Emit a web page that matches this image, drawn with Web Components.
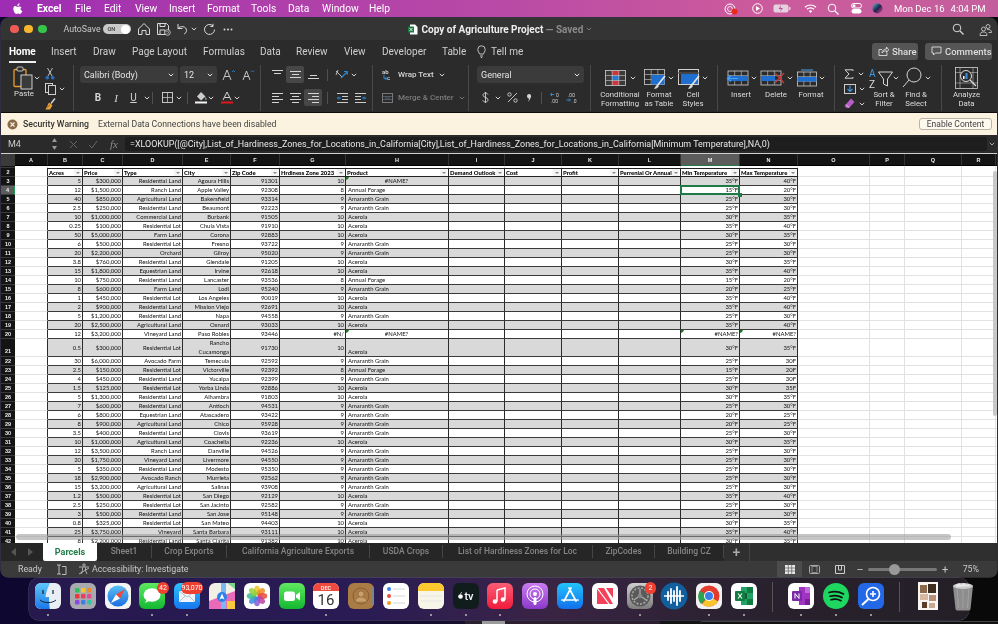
<!DOCTYPE html>
<html lang="en"><head><meta charset="utf-8"><title>Excel</title>
<style>
html,body{margin:0;height:624px;width:998px;overflow:hidden;background:#0a0a14;font-family:Roboto,"Noto Sans",sans-serif}
body{background:linear-gradient(90deg,#0e0830 0,#120a38 30%,#1a1228 55%,#0b0b0b 80%,#090909 100%);display:flex;flex-direction:column;filter:blur(.3px)}
</style></head><body>
<mac-menubar></mac-menubar>
<xl-window>
  <xl-titlebar></xl-titlebar>
  <xl-tabs></xl-tabs>
  <xl-ribbon></xl-ribbon>
  <xl-security></xl-security>
  <xl-formula></xl-formula>
  <xl-sheet></xl-sheet>
  <xl-sheettabs></xl-sheettabs>
  <xl-status></xl-status>
</xl-window>
<mac-dock></mac-dock>
<mac-desk></mac-desk>
<script>
const S='fill="none" stroke="currentColor"';
const grid=(x,y,w,h,c='#cfcfcf')=>`<rect x="${x}" y="${y}" width="${w}" height="${h}" fill="none" stroke="${c}" stroke-width=".8"/><path d="M${x} ${y+h/3}h${w}M${x} ${y+2*h/3}h${w}M${x+w/3} ${y}v${h}M${x+2*w/3} ${y}v${h}" stroke="${c}" stroke-width=".6"/>`;
const brush=`<path d="M21 7L13 17" stroke="#e8e8e8" stroke-width="1.6"/><path d="M13 16c-2 1-2 3-3 4 2 0 4-1 5-3z" fill="#d8d8d8"/>`;
const lines=(d)=>`<path d="${d}" stroke="currentColor" stroke-width="1" fill="none"/>`;
const ICONS={
 apple:[10,12,`<path fill="#fff" d="M7.4 6.4c0-1.3 1-1.9 1.1-2-.6-.9-1.5-1-1.8-1-.8-.1-1.5.4-1.9.4s-1-.4-1.7-.4C2.2 2.4 1.3 3 .8 3.8c-1 1.7-.3 4.3.7 5.7.5.7 1 1.5 1.8 1.5.7 0 1-.5 1.8-.5s1.1.5 1.8.5 1.3-.7 1.700-1.400c.5-.8.8-1.600.8-1.600s-1.900-.7-2-2.600zM6 2.200c.4-.5.7-1.200.6-1.900-.6 0-1.300.4-1.700.9-.4.4-.7 1.100-.6 1.800.6 0 1.300-.3 1.700-.8z"/>`],
 home:[14,14,`<path ${S} stroke-width="1" d="M1.5 7L7 1.500 12.500 7v5.500H9V8.500H5v4H1.500z"/>`],
 save:[15,14,`<path ${S} stroke-width="1" d="M1.500 1.500h9l2 2v9h-11z M4 1.500v3h5v-3M4 12V8h5v4"/><circle cx="11.500" cy="10.500" r="2.800" fill="#2f2f2f" stroke="currentColor" stroke-width=".8"/><path d="M10.300 10.500a1.200 1.200 0 1 1 .5 1" ${S} stroke-width=".6"/>`],
 undo:[13,12,`<path ${S} stroke-width="1" d="M3 1v4.500h4.500M3 5.500C5 2.500 11.500 3 11.500 7.500c0 2-1.300 3-2.500 3.500"/>`],
 redo:[13,13,`<path ${S} stroke-width="1" d="M11.500 6.500a5 5 0 1 1-1.500-3.600M10 .8v2.700H7.300"/>`],
 caret:[6,4,`<path ${S} stroke-width="1" d="M.8.8L3 3l2.200-2.200"/>`],
 dots:[10,3,`<g fill="currentColor"><circle cx="1.500" cy="1.500" r="1"/><circle cx="5" cy="1.500" r="1"/><circle cx="8.500" cy="1.500" r="1"/></g>`],
 search:[12,12,`<circle cx="5" cy="5" r="3.800" ${S} stroke-width="1"/><path ${S} stroke-width="1.200" d="M8 8l3.500 3.500"/>`],
 people:[13,13,`<circle cx="9" cy="3.500" r="2" ${S} stroke-width=".8"/><circle cx="4.500" cy="6" r="2" ${S} stroke-width=".8"/><path ${S} stroke-width=".8" d="M1 12.500c0-3 1.500-3.500 3.500-3.500S8 9.500 8 12.500zM8 6.500c3 0 4.500.5 4.500 3h-3"/>`],
 xlfile:[10,11,`<path d="M2 .5h5l2.500 2.500v7.500H2z" fill="#fff"/><rect y="2.500" width="6" height="6" rx=".6" fill="#1d7a45"/><path d="M1.500 4l3 3M4.500 4l-3 3" stroke="#fff" stroke-width=".8"/>`],
 bulb:[9,13,`<path ${S} stroke-width=".9" d="M2.500 9C2.300 7.500.8 6.800.8 4.500a3.700 3.700 0 0 1 7.400 0C8.200 6.800 6.700 7.500 6.500 9zM3 11h3M3.800 12.500h1.400"/>`],
 share:[11,10,`<path ${S} stroke-width=".9" d="M4 3.500H1v6h8V7M4 7c0-2.500 2-4 4.500-4V1l2.200 2.800L8.500 6.500V4.800C6.500 4.800 5 5.500 4 7z"/>`],
 comment:[11,10,`<path ${S} stroke-width=".9" d="M1 1h9v6H4.500L2.500 9V7H1z"/>`],
 paste:[20,24,`<rect x="1" y="3.500" width="12" height="17" rx="1" fill="none" stroke="#e89a2c" stroke-width="1.300"/><rect x="4" y="1" width="6" height="4" rx="1" fill="#2b2b2b" stroke="#cfcfcf" stroke-width=".9"/><rect x="8" y="9" width="11" height="14" fill="#3a3a3a" stroke="#e0e0e0" stroke-width=".9"/>`],
 cut:[10,12,`<path stroke="#cfcfcf" stroke-width=".9" d="M2.500 0L7 8M7.500 0L3 8"/><circle cx="2.300" cy="9.800" r="1.800" fill="#2a73c4"/><circle cx="7.700" cy="9.800" r="1.800" fill="#2a73c4"/>`],
 copy:[11,12,`<rect x=".5" y=".5" width="7" height="9" fill="none" stroke="#cfcfcf"/><rect x="3.500" y="2.500" width="7" height="9" fill="#2b2b2b" stroke="#cfcfcf"/>`],
 fmtbrush:[11,12,`<path d="M10 .5L6 5.500" stroke="#ddd" stroke-width="1.300"/><path d="M4 4.500l3.500 2.800-2.500 4.200H.5z" fill="#e6a437"/><path d="M2 9.500l3-2.500" stroke="#5a3d10" stroke-width=".6"/>`],
 grow:[14,12,`<path ${S} stroke-width=".9" d="M1 11L5 1l4 10M2.500 7.500h5"/><path stroke="#2a8ad8" fill="none" stroke-width=".9" d="M10 3l1.500-1.500L13 3"/>`],
 shrink:[14,12,`<path ${S} stroke-width=".9" d="M2 11L5.500 2 9 11M3.300 7.500h4.400"/><path stroke="#2a8ad8" fill="none" stroke-width=".9" d="M10 1.500L11.500 3 13 1.500"/>`],
 borders:[12,12,`<rect x=".5" y=".5" width="10" height="10" ${S} stroke-width=".9"/><path ${S} stroke-width=".7" d="M5.500 .5v10M.5 5.500h10"/>`],
 fill:[13,13,`<path d="M6 1l4.500 4.500L6 9.500 2 5.500z" fill="#ccc"/><path d="M10.500 6c1 1.500 1.500 2 .9 2.800-.8.5-1.500-.2-.9-2.800z" fill="#8cc"/><rect y="10.500" width="12" height="2" fill="#f4f4f4"/>`],
 fontA:[12,13,`<path ${S} stroke-width="1" d="M2 9L6 1l4 8M3.500 6.500h5"/><rect y="10.500" width="12" height="2" fill="#e0161c"/>`],
 al1:[11,9,lines('M0 .5h11M2 3.500h7')],
 al2:[11,11,lines('M0 2.500h11M2 5.500h7M0 8.500h11')],
 al3:[11,11,lines('M2 6.500h7M0 9.500h11')],
 alL:[11,11,lines('M0 1.500h11M0 4.500h7M0 7.500h11M0 10.500h7')],
 alC:[11,11,lines('M0 1.500h11M2 4.500h7M0 7.500h11M2 10.500h7')],
 alR:[11,11,lines('M0 1.500h11M4 4.500h7M0 7.500h11M4 10.500h7')],
 orient:[13,12,`<path stroke="#ccc" fill="none" stroke-width=".9" d="M1 2l6 6M3 1l-2 5"/><path stroke="#2a8ad8" fill="none" stroke-width="1.100" d="M6 9l6-6M9 2.500h3.300v3.300"/>`],
 ind1:[11,10,`<path stroke="#ccc" d="M0 .5h11M5 3.500h6M5 6.500h6M0 9.500h11"/><path stroke="#2a8ad8" fill="none" d="M4 5H.5M2 3.500L.5 5 2 6.500"/>`],
 ind2:[11,10,`<path stroke="#ccc" d="M0 .5h11M0 3.500h6M0 6.500h6M0 9.500h11"/><path stroke="#2a8ad8" fill="none" d="M7 5h3.500M9 3.500L10.500 5 9 6.500"/>`],
 wrap:[11,12,`<text x="0" y="5" font-size="6" font-family="Roboto" fill="#ddd">ab</text><text x="5" y="11" font-size="6" font-family="Roboto" fill="#ddd">c</text><path stroke="#2a8ad8" fill="none" d="M2 6v3.500h2.500M3.500 8L4.800 9.500 3.500 11"/>`],
 merge:[11,10,`<rect x=".5" y=".5" width="10" height="9" fill="none" stroke="#777"/><path d="M.5 3.500h10M.5 6.500h10" stroke="#777" stroke-width=".6"/><path d="M3 5h5" stroke="#2a6aa8"/>`],
 dollar:[7,11,`<path ${S} stroke-width=".9" d="M6 2.500C5.500 1.500 4.500 1 3.500 1 2 1 1 2 1 3.200 1 6 6 4.800 6 7.800 6 9 5 10 3.500 10 2 10 1.200 9.300 .8 8.300M3.500 0v11"/>`],
 pct:[11,11,`<path ${S} stroke-width=".9" d="M1 10L10 1"/><circle cx="2.500" cy="2.500" r="1.700" ${S} stroke-width=".9"/><circle cx="8.500" cy="8.500" r="1.700" ${S} stroke-width=".9"/>`],
 comma:[5,8,`<path fill="currentColor" d="M2 0a2.200 2.200 0 0 1 1.500 3.800C3.200 5.500 2.200 7 1 8c.6-1.200 1-2.400 1-3.500C.8 4.500 0 3.300 0 2.200 0 1 .8 0 2 0z"/>`],
 incd:[12,11,`<path stroke="#2a8ad8" fill="none" d="M4 2.500H.8M2 1L.5 2.500 2 4"/><text x="6" y="4.500" font-size="5" fill="#ccc" font-family="Roboto">0</text><text x="1" y="10.500" font-size="5" fill="#ccc" font-family="Roboto">.00</text>`],
 decd:[12,11,`<text x="2" y="4.500" font-size="5" fill="#ccc" font-family="Roboto">.00</text><path stroke="#2a8ad8" fill="none" d="M.5 8h3.500M3 6.500L4.500 8 3 9.500"/><text x="6.500" y="10.500" font-size="5" fill="#ccc" font-family="Roboto">.0</text>`],
 cond:[21,16,`<rect x=".5" y=".5" width="20" height="15" fill="#3a3a3a"/><rect x="7" y="1" width="7" height="4.500" fill="#c9383d"/><rect x="7" y="10.500" width="7" height="4.500" fill="#c9383d"/><rect x="7" y="5.500" width="7" height="5" fill="#2a78cc"/>`+grid(.5,.5,20,15)],
 ftable:[22,18,grid(.5,.5,20,15)+`<rect x="7.500" y="6" width="13" height="9.500" fill="#1e6fd0"/>`+brush],
 cstyle:[22,18,`<rect x=".5" y=".5" width="20" height="15" fill="none" stroke="#cfcfcf"/><rect x=".5" y="3" width="20" height="2" fill="#444"/><rect x="3" y="5" width="17" height="10" fill="#1e6fd0"/>`+brush],
 insert:[23,16,grid(2,1,20,14)+`<rect x="2" y="6" width="20" height="5" fill="#1e6fd0"/><path d="M12 8.500H1.500M5 5.500l-3.500 3 3.500 3" stroke="#4aa3ef" fill="none" stroke-width="1.200"/>`],
 del:[25,16,grid(1,1,20,14)+`<rect x="1" y="6" width="14" height="5" fill="#1e6fd0"/><path d="M15 3l9 10M24 3l-9 10" stroke="#c43c3c" stroke-width="1.200"/>`],
 fmt:[20,18,`<path d="M4 1h12" stroke="#4aa3ef" stroke-width="1.200"/>`+grid(.5,3,19,14)+`<rect x=".5" y="8" width="19" height="4.500" fill="#1e6fd0"/>`],
 sigma:[10,10,`<path ${S} stroke-width="1" d="M9 2V.8H1l4 4.200-4 4.200h8V8"/>`],
 fdown:[12,10,`<rect x=".5" y=".5" width="11" height="9" fill="none" stroke="#ccc"/><path stroke="#3b9be6" fill="none" stroke-width="1.100" d="M6 1.500v6M3.500 5L6 7.500 8.500 5"/>`],
 erase:[11,11,`<path fill="#b75dc9" d="M7 .5L10.500 4 5 10H2.500L.5 8z"/><path d="M2 6.500l3 3" stroke="#eed" stroke-width=".8"/>`],
 sort:[24,20,`<text x="0" y="9" font-size="10" fill="#3b9be6" font-family="Roboto">A</text><text x="0" y="20" font-size="10" fill="#ddd" font-family="Roboto">Z</text><path ${S} stroke-width="1" d="M9.500 4h14l-5 7v7l-4-2v-5z"/>`],
 find:[20,23,`<circle cx="12" cy="8" r="7" ${S} stroke-width="1"/><path ${S} stroke-width="1" d="M7 13L1 20"/>`],
 analyze:[23,23,`<rect x=".5" y=".5" width="22" height="21" ${S} stroke-width=".8"/><path ${S} stroke-width=".5" d="M.5 5.500h22M.5 16h22M5 .5v21M18 .5v21"/><circle cx="11" cy="9" r="5.500" fill="#2b2b2b" stroke="#ddd"/><rect x="8" y="9" width="1.500" height="3" fill="#fff"/><rect x="10.500" y="6" width="2" height="6" fill="#3b8fe0"/><path d="M15 13l6 6" stroke="#ddd" stroke-width="1.200"/>`],
 spin:[7,14,`<path d="M3.500 1l2.500 4H1zM3.500 13L1 9h5z" fill="currentColor"/>`],
 xmark:[9,9,`<path ${S} stroke-width="1" d="M1 1l7 7M8 1L1 8"/>`],
 check:[10,9,`<path ${S} stroke-width="1" d="M1 5l3 3 5-7"/>`],
 secx:[11,11,`<circle cx="5.500" cy="5.500" r="5" fill="#8a6a4a"/><path stroke="#f6efe0" stroke-width="1.200" d="M3.500 3.500l4 4M7.500 3.500l-4 4"/>`],
 recmenu:[14,12,`<circle cx="6" cy="6" r="5" ${S}/><circle cx="6" cy="6" r="2.500" ${S} stroke-width=".8"/><circle cx="10.500" cy="8.500" r="3" fill="#e8291c"/>`],
 play:[11,11,`<circle cx="5.500" cy="5.500" r="4.800" ${S}/><path d="M4 3l4 2.500L4 8z" fill="currentColor"/>`],
 batt:[18,9,`<rect x=".5" y=".5" width="15" height="8" rx="2" fill="#e6d0df"/><rect x="16" y="3" width="1.500" height="3" rx=".5" fill="#e6d0df"/><path d="M8 1L5.500 5H8L7 8l3-4H7.500z" fill="#b5559d"/>`],
 wifi:[13,9,`<path ${S} stroke-width="1.200" d="M1 3.200a8 8 0 0 1 11 0M3 5.300a5 5 0 0 1 7 0"/><path d="M6.500 9L4.800 7a2.500 2.500 0 0 1 3.400 0z" fill="currentColor"/>`],
 ctrl:[11,11,`<rect x=".5" y=".5" width="10" height="4.500" rx="2.200" ${S}/><rect x=".5" y="6" width="10" height="4.500" rx="2.200" fill="currentColor"/><circle cx="3" cy="2.750" r="1.500" fill="currentColor"/>`],
 siri:[11,11,`<defs><linearGradient id="g1" x1="0" y1="0" x2="1" y2="1"><stop offset="0" stop-color="#3bc4d8"/><stop offset=".5" stop-color="#24224a"/><stop offset="1" stop-color="#d84aa0"/></linearGradient></defs><circle cx="5.500" cy="5.500" r="5" fill="url(#g1)"/>`],
 arrowL:[6,8,`<path d="M5 0v8L0 4z" fill="currentColor"/>`],
 arrowR:[6,8,`<path d="M1 0v8l5-4z" fill="currentColor"/>`],
 track:[11,11,`<path ${S} stroke-width=".9" d="M1 1h4M3 1v9M1 10h4M6 2.500h4v8H6"/>`],
 access:[12,12,`<circle cx="6" cy="2" r="1.200" ${S} stroke-width=".8"/><path ${S} stroke-width=".8" d="M1 4h10M4.500 4.500v3L3 11M7.500 4.500v3L9 11M1 11L11 5"/>`],
 vnormal:[10,9,`<rect width="10" height="9" fill="#e8e8e8"/><path stroke="#444" stroke-width=".6" d="M0 3h10M0 6h10M3.300 0v9M6.700 0v9"/>`],
 vlayout:[11,9,`<rect x=".5" y=".5" width="10" height="8" rx="1" fill="none" stroke="#aaa"/><rect x="3" y="1.500" width="5" height="6" fill="none" stroke="#aaa" stroke-width=".7"/>`],
 vbreak:[10,9,`<path fill="none" stroke="#ccc" d="M.5 .5h9v8h-9z M3.500 .5v4.500h3V.5"/>`]
};
class Base extends HTMLElement{
 constructor(){super();this.attachShadow({mode:'open'});}
 render(css,html){this.shadowRoot.innerHTML=`<style>${css}</style>${html}`;}
}
class XIco extends Base{
 connectedCallback(){const n=this.getAttribute('name');const[w,h,b]=ICONS[n];const col=this.getAttribute('color')||'inherit';
  this.render(`:host{display:inline-flex;align-items:center;justify-content:center;color:${col};flex:none;line-height:0}svg{display:block;overflow:visible}`,`<svg width="${w}" height="${h}" viewBox="0 0 ${w} ${h}" aria-hidden="true">${b}</svg>`);}
}
customElements.define('x-ico',XIco);
const I=(n,extra='')=>`<x-ico name="${n}" ${extra}></x-ico>`;

class MacMenubar extends Base{connectedCallback(){
 const items=[['File',29],['Edit',31],['View',34],['Insert',38],['Format',44],['Tools',37],['Data',34],['Window',47],['Help',30]];
 this.render(`:host{display:flex;align-items:center;height:17px;flex:none;background:linear-gradient(90deg,#9d2cb4 0,#ab3bab 20%,#b94aa6 50%,#cb5a9c 75%,#c45f9d 100%);color:#fff;font:10.300px/17px Roboto,sans-serif;padding-left:13px;box-sizing:border-box;white-space:nowrap}
 b{font-weight:700;margin-left:14px;width:38px;flex:none}span{flex:none}
 .r{margin-left:auto;margin-right:13px;width:261px;display:flex;align-items:center;font-size:9.500px}`,
 `${I('apple')}<b>Excel</b>${items.map(([t,w])=>`<span style="width:${w}px">${t}</span>`).join('')}
 <div class="r">${I('recmenu')}<x-ico name="play" style="margin-left:14px"></x-ico><x-ico name="batt" style="margin-left:10px"></x-ico><x-ico name="wifi" style="margin-left:12.500px"></x-ico><x-ico name="search" style="margin-left:10.500px"></x-ico><x-ico name="ctrl" style="margin-left:11.500px"></x-ico><x-ico name="siri" style="margin-left:10px"></x-ico><span style="margin-left:11.500px;margin-right:6px">Mon Dec 16</span><span>4:04 PM</span></div>`);
}}
class XlWindow extends Base{connectedCallback(){
 this.render(`:host{display:flex;flex-direction:column;flex:none;margin:1px 1px 0 1px;height:559px;border-radius:8px 8px 7px 7px;overflow:hidden;box-shadow:0 0 0 .5px #555;background:#2b2b2b}`,`<slot></slot>`);
}}
class XlTitlebar extends Base{connectedCallback(){
 this.render(`:host{display:flex;align-items:center;height:22px;flex:none;background:#343434;color:#d8d8d8;font:8.800px Roboto,sans-serif;white-space:nowrap}
 i{width:8.500px;height:8.500px;border-radius:50%;display:block;margin-right:5.500px;flex:none}
 .t{font-size:10px;font-weight:700;color:#eee}.s{color:#8a8a8a;font-size:10px;font-weight:700}
 .as{width:39px;flex:none;color:#c8c8c8}
 .tg{width:28px;flex:none;height:10px;border-radius:5px;background:#c9c9c9;position:relative;font-size:5.500px;color:#444;line-height:10px;padding-left:5px;box-sizing:border-box;font-weight:600}
 .tg::after{content:"";position:absolute;right:.5px;top:.5px;width:9px;height:9px;border-radius:50%;background:#fff}`,
 `<i style="background:#ee5b55;margin-left:9px"></i><i style="background:#f6b62d"></i><i style="background:#35c649;margin-right:17px"></i>
 <span class="as">AutoSave</span><span class="tg">ON</span>
 <x-ico name="home" style="margin-left:6px"></x-ico><x-ico name="save" style="margin-left:5px"></x-ico><x-ico name="undo" style="margin-left:4px"></x-ico><x-ico name="caret" style="margin-left:3px"></x-ico><x-ico name="redo" style="margin-left:6px"></x-ico><x-ico name="dots" style="margin-left:7px"></x-ico>
 <x-ico name="xlfile" style="margin-left:175px;margin-right:4px"></x-ico><span class="t">Copy of Agriculture Project</span><span class="s">&nbsp;— Saved</span><x-ico name="caret" color="#777" style="margin-left:3px"></x-ico>
 <x-ico name="search" style="margin-left:auto;margin-right:15px"></x-ico><x-ico name="people" style="margin-right:5px"></x-ico>`);
}}
class XlTabs extends Base{connectedCallback(){
 const tabs=[['Insert',42],['Draw',39],['Page Layout',71],['Formulas',57],['Data',36],['Review',48],['View',38],['Developer',60],['Table',34]];
 this.render(`:host{display:flex;align-items:center;height:22px;flex:none;background:#2b2b2b;color:#cfcfcf;font:10px Roboto,sans-serif;padding-left:8px;white-space:nowrap;position:relative}
 span{flex:none}
 .hm{width:42px}.on{color:#fff;font-weight:700;position:relative;display:inline-block}.on::after{content:"";position:absolute;left:0;right:0;top:15.500px;height:2px;background:#eee}
 .btn{display:inline-flex;align-items:center;gap:3px;height:17px;border-radius:3px;background:#555;font-weight:500;color:#ddd;padding:0 5px 0 6px;box-sizing:border-box;font-size:9.500px}
 .sp{margin-left:auto;display:flex;gap:7px;margin-right:5px}`,
 `<span class="hm"><span class="on">Home</span></span>${tabs.map(([t,w])=>`<span style="width:${w}px">${t}</span>`).join('')}
 <span style="display:flex;align-items:center;gap:5px;margin-left:1px">${I('bulb')}<span>Tell me</span></span>
 <div class="sp"><span class="btn" style="width:46px">${I('share')}Share</span><span class="btn" style="width:67px">${I('comment')}Comments</span></div>`);
}}
const cell=(w,h='',cl='')=>`<span class="c ${cl}" style="width:${w}px">${h}</span>`;
const dd=(w,txt)=>`<span class="dd" style="width:${w}px"><span>${txt}</span>${I('caret')}</span>`;
const big=(w,ico,l,car=true,g=2)=>`<div class="big" style="width:${w}px"><div class="bi">${I(ico)}${car?I('caret','style="margin-left:'+g+'px"'):''}</div><div class="bl">${l}</div></div>`;
const hsep='<span class="hs"></span>';
class XlRibbon extends Base{connectedCallback(){
 this.render(`:host{display:flex;height:51px;flex:none;background:#2b2b2b;color:#d4d4d4;font:8px Roboto,sans-serif;border-bottom:1px solid #0b0b0b;box-sizing:border-box;white-space:nowrap}
 .g{box-sizing:border-box;border-right:1px solid #484848;display:flex;flex-direction:column;gap:6px;flex:none;height:46px;margin-top:3px;padding-top:1px}
 .g.h{flex-direction:row;gap:0}
 .r{display:flex;align-items:center;height:17px}
 .c{display:inline-flex;align-items:center;justify-content:center;height:17px;flex:none}
 .on{background:#474747;border-radius:2px}
 .hs{width:1px;height:12px;background:#505050;flex:none}
 .dd{display:inline-flex;align-items:center;justify-content:space-between;height:17px;background:#3b3b3b;border-radius:3px;box-sizing:border-box;padding:0 4px;color:#e4e4e4;font-size:9px;flex:none}
 .big{display:flex;flex-direction:column;align-items:center;flex:none}
 .bi{height:24px;display:flex;align-items:center;justify-content:center}
 .bl{font-size:7.800px;line-height:9px;text-align:center;height:18px;white-space:pre-line;margin-top:-.5px;color:#ddd}
 .b{font-weight:700;font-size:10px}.it{font-style:italic;font-family:"Liberation Serif",serif;font-size:11px}.u{text-decoration:underline;font-size:10px}
 .col{display:flex;flex-direction:column;gap:0}
 .s{height:15px;display:flex;align-items:center}`,
 `<div class="g h" style="width:73px;padding-left:10px">
    <div class="big" style="width:30px"><div class="bi" style="height:23px">${I('paste')}${I('caret','style="margin-left:1px"')}</div><div class="bl" style="margin-top:0;margin-left:-4px">Paste</div></div>
    <div class="col" style="margin-left:4px;padding-top:0"><div class="s">${I('cut')}</div><div class="s">${I('copy')}${I('caret','style="margin-left:3px"')}</div><div class="s">${I('fmtbrush')}</div></div>
  </div>
  <div class="g" style="width:187px;padding-left:6px">
    <div class="r">${dd(98,'Calibri (Body)')}${cell(2)}${dd(37,'12')}${cell(2)}${cell(19,I('grow'))}${cell(19,I('shrink'))}</div>
    <div class="r">${cell(9)}${cell(18,'<span class="b">B</span>')}${cell(18,'<span class="it">I</span>')}${cell(17,'<span class="u">U</span>')}${cell(10,I('caret'))}${hsep}${cell(9)}${cell(12,I('borders'))}${cell(9,I('caret'))}${cell(4)}${hsep}${cell(7)}${cell(13,I('fill'))}${cell(6,I('caret'),'')}${cell(6)}${cell(13,I('fontA'))}${cell(7,I('caret'))}</div>
  </div>
  <div class="g" style="width:112px;padding-left:7px">
    <div class="r">${cell(18,I('al1'))}${cell(18,I('al2'),'on')}${cell(18,I('al3'))}${cell(5)}${hsep}${cell(6)}${cell(15,I('orient'))}${cell(10,I('caret'))}</div>
    <div class="r">${cell(18,I('alL'))}${cell(18,I('alC'))}${cell(18,I('alR'),'on')}${cell(5)}${hsep}${cell(6)}${cell(16,I('ind1'))}${cell(20,I('ind2'))}</div>
  </div>
  <div class="g" style="width:96px;padding-left:9px">
    <div class="r"><span style="display:flex;align-items:center;gap:5px;font-weight:500">${I('wrap')}<span>Wrap Text</span>${I('caret')}</span></div>
    <div class="r"><span style="display:flex;align-items:center;gap:5px;color:#7b7b7b;font-weight:500">${I('merge','color="#777"')}<span>Merge &amp; Center</span>${I('caret','color="#777"')}</span></div>
  </div>
  <div class="g" style="width:122px;padding-left:8px">
    <div class="r">${dd(107,'General')}</div>
    <div class="r">${cell(16,I('dollar'))}${cell(10,I('caret'))}${cell(18,I('pct'))}${cell(16,I('comma'))}${cell(4)}${hsep}${cell(6)}${cell(15,I('incd'))}${cell(18,I('decd'))}</div>
  </div>
  <div class="g h" style="width:127px;padding-left:8px">${big(42,'cond','Conditional\nFormatting',true,4)}${big(36,'ftable','Format\nas Table')}${big(32,'cstyle','Cell\nStyles')}</div>
  <div class="g h" style="width:117px;padding-left:5px">${big(36,'insert','Insert')}${big(34,'del','Delete')}${big(36,'fmt','Format')}</div>
  <div class="g h" style="width:107px;padding-left:9px">
    <div class="col" style="width:25px;padding-top:1px"><div class="s">${I('sigma')}${I('caret','style="margin-left:4px"')}</div><div class="s">${I('fdown')}${I('caret','style="margin-left:3px"')}</div><div class="s">${I('erase')}${I('caret','style="margin-left:4px"')}</div></div>
    ${big(30,'sort','Sort &amp;\nFilter',true,0)}${big(34,'find','Find &amp;\nSelect',true,3)}
  </div>
  <div class="g h" style="width:49px;border:0;padding-left:2px">${big(45,'analyze','Analyze\nData',false)}</div>`);
}}
class XlSecurity extends Base{connectedCallback(){
 this.render(`:host{display:flex;align-items:center;height:22px;flex:none;background:#fbf3df;color:#444;font:8.700px Roboto,sans-serif;padding-left:6px;white-space:nowrap;box-sizing:border-box}
 b{font-weight:500;color:#333;margin-left:5px;width:75px;flex:none}.bt{margin-left:auto;margin-right:5px;border:1px solid #b9b4a6;border-radius:3px;background:#fdf9ee;font-size:8.500px;height:12px;width:73px;box-sizing:border-box;display:flex;align-items:center;justify-content:center}`,
 `${I('secx')}<b>Security Warning</b><span>External Data Connections have been disabled</span><span class="bt">Enable Content</span>`);
}}
class XlFormula extends Base{connectedCallback(){
 this.render(`:host{display:flex;align-items:center;height:18px;flex:none;background:#2a2a2a;color:#ccc;font:9px Roboto,sans-serif;white-space:nowrap;border-bottom:1px solid #cfcfcf;box-sizing:content-box;position:relative}
 .n{margin-left:7px;width:43px}.f{margin-left:7px;flex:none;width:862px;height:14px;background:#1e1e1e;border-radius:2px;padding-left:5px;box-sizing:border-box;color:#e8e8e8;line-height:14px;overflow:hidden;font-size:8.930px}
 .fx{font:italic 11px "Liberation Serif",serif;color:#8a8a8a;margin-left:12px;width:8px;flex:none}`,
 `<span class="n">M4</span>${I('spin','color="#999"')}<x-ico name="xmark" color="#666" style="margin-left:11px"></x-ico><x-ico name="check" color="#666" style="margin-left:10px"></x-ico><span class="fx">fx</span>
 <span class="f">=XLOOKUP([@City],List_of_Hardiness_Zones_for_Locations_in_California[City],List_of_Hardiness_Zones_for_Locations_in_California[Minimum Temperature],NA,0)</span>
 <x-ico name="caret" color="#aaa" style="margin-left:2px"></x-ico>`);
}}
const AM='Amaranth Grain',AC='Acerola',AF='Annual Forage',RL='Residential Land',RT='Residential Lot',AG='Agricultural Land';
const DATA=[
[5,'$300,000',RL,'Agoura Hills',91301,10,'#NAME?',35,40],[12,'$1,500,000','Ranch Land','Apple Valley',92308,8,AF,15,20],[40,'$850,000',AG,'Bakersfield',93314,9,AM,25,30],[2.5,'$250,000',RL,'Beaumont',92223,9,AM,25,30],[10,'$1,000,000','Commercial Land','Burbank',91505,10,AC,30,35],[0.25,'$100,000',RT,'Chula Vista',91910,10,AC,35,40],[50,'$5,000,000','Farm Land','Corona',92883,10,AC,30,35],[6,'$500,000',RT,'Fresno',93722,9,AM,25,30],[20,'$2,200,000','Orchard','Gilroy',95020,9,AM,25,30],[3.8,'$760,000',RL,'Glendale',91205,10,AC,30,35],[15,'$1,800,000','Equestrian Land','Irvine',92618,10,AC,35,40],[10,'$750,000',RL,'Lancaster',93536,8,AF,15,20],[8,'$600,000','Farm Land','Lodi',95240,9,AM,20,25],[1,'$450,000',RT,'Los Angeles',90019,10,AC,35,40],[2,'$900,000',RL,'Mission Viejo',92691,10,AC,35,40],[5,'$1,200,000',RL,'Napa',94558,9,AM,25,30],[20,'$2,500,000',AG,'Oxnard',93033,10,AC,35,40],[12,'$3,200,000','Vineyard Land','Paso Robles',93446,'#N/','#NAME?','#NAME?','#NAME?'],[0.5,'$300,000',RT,'Rancho Cucamonga',91730,10,AC,30,35],[30,'$6,000,000','Avocado Farm','Temecula',92592,9,AM,25,'30F'],[2.5,'$150,000',RT,'Victorville',92392,8,AF,15,'20F'],[4,'$450,000',RL,'Yucaipa',92399,9,AM,25,'30F'],[1.5,'$125,000',RT,'Yorba Linda',92886,10,AC,30,'35F'],[5,'$1,300,000',RL,'Alhambra',91803,10,AC,30,35],[7,'$600,000',RL,'Antioch',94531,9,AM,25,30],[6,'$800,000','Equestrian Land','Atascadero',93422,9,AM,20,25],[8,'$900,000',AG,'Chico',95928,9,AM,20,25],[3.5,'$400,000',RL,'Clovis',93619,9,AM,25,30],[10,'$1,000,000',AG,'Coachella',92236,10,AC,30,35],[12,'$3,500,000','Ranch Land','Danville',94526,9,AM,25,30],[20,'$1,750,000','Vineyard Land','Livermore',94550,9,AM,25,30],[5,'$350,000',RL,'Modesto',95350,9,AM,25,30],[18,'$2,900,000','Avocado Ranch','Murrieta',92562,9,AM,25,30],[15,'$3,200,000',AG,'Salinas',93908,9,AM,25,30],[1.2,'$500,000',RT,'San Diego',92129,10,AC,35,40],[2.5,'$250,000',RT,'San Jacinto',92582,9,AM,25,30],[3,'$500,000',RL,'San Jose',95148,9,AM,25,30],[0.8,'$325,000',RT,'San Mateo',94403,10,AC,30,35],[25,'$3,750,000','Vineyard','Santa Barbara',93111,10,AC,35,40],[8,'$2,200,000',RL,'Santa Clarita',91382,10,AC,30,35]];
class XlSheet extends Base{connectedCallback(){
 const W=[14,33,35,40,60,48,49,66,103,56,57,57,62,59,58,72,35,57,34,3];
 const L=['A','B','C','D','E','F','G','H','I','J','K','L','M','N','O','P','Q','R',''];
 const HD=['Acres','Price','Type','City','Zip Code','Hrdiness Zone 2023','Product','Demand Outlook','Cost','Profit','Perrenial Or Annual','Min Temperature','Max Temperature'];
 const hr=[12,2,9];DATA.forEach((_,i)=>hr.push(i==18?18:9));
 let h=`<span class="corner"></span>`;
 L.forEach((l,i)=>{h+=`<span class="ch${l=='M'?' cs':''}">${l}</span>`;});
 h+=`<span class="rh"></span>`;L.forEach(()=>h+=`<span class="e t0"></span>`);
 h+=`<span class="rh">2</span><span class="e l"></span>`;
 HD.forEach((t,i)=>{h+=`<span class="hd"><span class="ht">${t}</span><span class="fb"></span></span>`;});
 for(let i=14;i<L.length;i++)h+=`<span class="e"></span>`;
 DATA.forEach((d,i)=>{const r=i+3,odd=r%2==1,cl=odd?'g':'w';
  const tall=r==21;
  h+=`<span class="rh${r==4?' rs':''}${tall?' rb':''}">${r}</span><span class="e l"></span>`;
  const fm=v=>typeof v=='number'?v+'°F':v;
  const vals=[d[0],d[1],d[2],d[3],d[4],d[5],d[6],'','','','',fm(d[7]),fm(d[8])];
  vals.forEach((v,j)=>{let k='d '+cl;
   if(j==6){k+=(v=='#NAME?')?' ctr':' lft';}
   if(tall)k+=j==6?' bot':' mid';
   let inner=`<span class="tx">${v}</span>`;
   if(tall&&j==3)inner='<span class="tx wrap">Rancho<br>Cucamonga</span>';
   let tri='';
   if((r==3&&j==6)||(r==20&&(j==6||j==11||j==12)))tri='<i class="tri"></i>';
   let sel='';if(r==4&&j==11){sel='<i class="sel"></i><i class="hd2"></i>';k+=' vis';}
   h+=`<span class="${k}">${tri}${inner}${sel}</span>`;});
  for(let j=14;j<L.length;j++)h+=`<span class="e"></span>`;
 });
 this.render(`:host{display:block;height:389px;flex:none;overflow:hidden;background:#fff;position:relative;font:5.900px/9px Lato,sans-serif;color:#111}
 .grid{display:grid;grid-template-columns:${W.join('px ')}px;grid-template-rows:${hr.join('px ')}px}
 .grid>span{box-sizing:border-box;min-width:0;overflow:hidden;white-space:nowrap}
 .corner{background:#3a3a3a}
 .ch{background:#141414;color:#eee;font:700 5.500px/12px "Liberation Sans",sans-serif;text-align:center;border-right:1px solid #333;border-bottom:1px solid #000}
 .ch.cs{background:#5c5c5c;border-bottom:1px solid #1f7a45}
 .rh{background:#141414;color:#eee;font:700 5.500px/9px "Liberation Sans",sans-serif;border-bottom:1px solid #3a3a3a;display:flex;align-items:center;justify-content:center}
 .rh.rb{align-items:flex-end}
 .rh.rs{background:#5c5c5c;border-right:1px solid #1f9a55}
 .e{border-right:1px solid #e2e2e2;border-bottom:1px solid #e2e2e2;background:#fff}
 .e.l{border-right:1px solid #2b2b2b}
 .t0{border-bottom:0}
 .hd{position:relative;background:#fff;border:1px solid #222;border-width:1px 1px 1px 0;display:flex;align-items:center;font-weight:900;color:#000;padding-left:1px;line-height:7px}
 .ht{overflow:hidden;flex:1;min-width:0}
 .fb{width:7px;height:7px;flex:none;margin-right:1px;background:#f4f4f4;position:relative}
 .fb::after{content:"";position:absolute;left:1.500px;top:2.500px;border:2px solid transparent;border-top:2.500px solid #888;border-bottom:0}
 .d{border-right:1px solid #2b2b2b;border-bottom:1px solid #3a3a3a;text-align:right;padding-right:1px;position:relative;line-height:8px}
 .d.g{background:#d9d9d9}.d.w{background:#fff}
 .lft{text-align:left;padding-left:2px}.ctr{text-align:center}
 .mid{display:flex;align-items:center;justify-content:flex-end}
 .bot{display:flex;align-items:flex-end;justify-content:flex-start}
 .tx.wrap{display:block;line-height:8.500px;text-align:right}
 .grid>.vis{overflow:visible;z-index:2}
 .tri{position:absolute;left:0;top:0;border:1.500px solid transparent;border-left:2.500px solid #1e7a1e;border-top:2.500px solid #1e7a1e;width:0;height:0;box-sizing:border-box}
 .sel{position:absolute;inset:-1px -1px -1px -1px;border:2px solid #1f7a45;display:block}
 .hd2{position:absolute;right:-3px;bottom:-3px;width:4px;height:4px;background:#1f7a45;display:block}
 .vs{position:absolute;left:992px;top:17px;width:4px;height:245px;border-radius:2px;background:#c8c8c8}
 .hs{position:absolute;left:15px;top:380px;width:935px;height:6px;border-radius:3px;background:rgba(150,150,150,.55)}`,
 `<div class="grid">${h}</div><div class="vs"></div><div class="hs"></div>`);
}}
class XlSheettabs extends Base{connectedCallback(){
 const T=[['Sheet1',55],['Crop Exports',75],['California Agriculture Exports',143],['USDA Crops',73],['List of Hardiness Zones for Loc',150],['ZipCodes',62],['Building CZ',69]];
 this.render(`:host{display:flex;align-items:stretch;height:18px;flex:none;background:#262626;color:#858585;font:500 8.500px/18px Roboto,sans-serif;white-space:nowrap}
 .n{width:42px;display:flex;align-items:center;gap:10px;padding-left:10px;box-sizing:border-box;color:#555;flex:none}
 .a{width:54px;background:#fff;color:#1d7d47;font-weight:700;font-size:9px;text-align:center;border-radius:0 0 2px 2px;flex:none}
 .t{border-right:1px solid #454545;margin:2px 0 3px;line-height:13px;box-sizing:border-box;text-align:center;flex:none}
 .p{width:26px;text-align:center;background:#2f2f2f;border-right:1px solid #454545;font-size:14px;color:#aaa;box-sizing:border-box;flex:none}.f{flex:1;background:#2f2f2f}`,
 `<div class="n">${I('arrowL')}${I('arrowR')}</div><span class="a">Parcels</span>${T.map(([t,w])=>`<span class="t" style="width:${w}px">${t}</span>`).join('')}<span class="p">+</span><span class="f"></span>`);
}}
class XlStatus extends Base{connectedCallback(){
 this.render(`:host{display:flex;align-items:center;height:16px;flex:none;background:#3a3a3a;color:#c9c9c9;font:8.800px Roboto,sans-serif;white-space:nowrap;padding-left:17px;box-sizing:border-box;position:relative}
 .rd{width:38px;flex:none}
 .v{height:16px;width:25px;display:flex;align-items:center;justify-content:center;flex:none}
 .on{background:#4c4c4c}
 .z{margin-left:auto;display:flex;align-items:center;padding-right:18px}
 .sl{width:69px;height:3px;background:#777;position:relative;border-radius:1.500px;flex:none}
 .sl::after{content:"";position:absolute;left:20.500px;top:-4px;width:11px;height:11px;border-radius:50%;background:#999}
 .pm{width:16px;text-align:center;font-size:11px;flex:none}.pc{width:26px;text-align:right;flex:none}`,
 `<span class="rd">Ready</span><x-ico name="track"></x-ico><x-ico name="access" style="margin-left:11px;margin-right:2px"></x-ico><span>Accessibility: Investigate</span>
 <div class="z"><span class="v on">${I('vnormal')}</span><span class="v">${I('vlayout')}</span><span class="v">${I('vbreak')}</span><span class="pm">–</span><span class="sl"></span><span class="pm">+</span><span class="pc">75%</span></div>`);
}}
const tile=(bg,inner,extra='')=>`<svg width="26" height="26" viewBox="0 0 26 26" aria-hidden="true"><defs>${extra}</defs><rect width="26" height="26" rx="6" fill="${bg}"/>${inner}</svg>`;
const lg=(id,a,b)=>`<linearGradient id="${id}" x1="0" y1="0" x2="0" y2="1"><stop offset="0" stop-color="${a}"/><stop offset="1" stop-color="${b}"/></linearGradient>`;
const DOCK=[
 [tile('#e9eef4',`<path d="M0 6a6 6 0 0 1 6-6h9c-3 6-4 10-4.500 14H14c0 4 .2 8 .8 12H6a6 6 0 0 1-6-6z" fill="url(#fa)"/><path d="M8 7v4M18 7v4" stroke="#123" stroke-width="1.200"/><path d="M5 17c4 3.500 12 3.500 16 0" stroke="#123" fill="none" stroke-width="1"/>`,lg('fa','#5fc8f8','#1a78e8')),1],
 [tile('#a9a9b0',[['#2fbf5a',5,5],['#f6c52c',11,5],['#f08a24',17,5],['#e83a38',5,11],['#e8405a',11,11],['#e84a90',17,11],['#8a4ae0',5,17],['#3a80e8',11,17],['#2fc8a0',17,17]].map(([c,x,y])=>`<rect x="${x}" y="${y}" width="4.500" height="4.500" rx="1" fill="${c}"/>`).join('')),0],
 [tile('#f3f3f3',`<circle cx="13" cy="13" r="10.500" fill="url(#sf)"/><path d="M20 6l-9 5.500 4 4z" fill="#f04a3a"/><path d="M6 20l5-8.500 4 4z" fill="#fff"/>`,lg('sf','#5ac0f5','#1a6ee0')),0],
 [tile('url(#ms)',`<ellipse cx="13" cy="12" rx="8.500" ry="6.800" fill="#fff"/><path d="M8 16l-2 4 5-2.500z" fill="#fff"/>`,lg('ms','#5ee860','#13b832')),1],
 [tile('url(#ml)',`<rect x="5" y="8" width="16" height="11" fill="#eef3fa"/><path d="M5 8l8 6 8-6M5 19l6-6M21 19l-6-6" stroke="#9ab" stroke-width=".7" fill="none"/>`,lg('ml','#2dc2fb','#1676ef')),1],
 [tile('#f2efe4',`<path d="M0 18L26 8v18H0z" fill="#e86ab8"/><path d="M12 0h5v26h-5z" fill="#7ab8f0"/><path d="M18 18h8v8h-8z" fill="#f6c93a"/><path d="M18 0h8v6z" fill="#7ad88a"/><circle cx="13" cy="14" r="5" fill="#2c82e8"/><path d="M13 10.500l2.500 6-2.500-1.300-2.500 1.300z" fill="#fff"/>`),0],
 [tile('#fff',[['#f0c21f',0],['#f08a24',45],['#e84a3a',90],['#c03ea0',135],['#8a5ad8',180],['#3a8ae0',225],['#3ab890',270],['#8fd03a',315]].map(([c,a])=>`<ellipse cx="13" cy="7.500" rx="3" ry="4.800" fill="${c}" opacity=".85" transform="rotate(${a} 13 13)"/>`).join('')),0],
 [tile('url(#ft)',`<rect x="5" y="8.500" width="11" height="9.500" rx="2.500" fill="#fff"/><path d="M17 12l4-3v8.500l-4-3z" fill="#fff"/>`,lg('ft','#60e860','#13b830')),0],
 [`<svg width="26" height="26" viewBox="0 0 26 26" aria-label="Calendar"><rect width="26" height="26" rx="6" fill="#fff"/><path d="M0 8V6a6 6 0 0 1 6-6h14a6 6 0 0 1 6 6v2z" fill="#f04a40"/><text x="13" y="6.500" text-anchor="middle" font-size="5.500" font-family="Roboto" fill="#fff" font-weight="500">DEC</text><text x="13" y="22" text-anchor="middle" font-size="15" font-family="Roboto" fill="#333">16</text></svg>`,1],
 [tile('#a97b45',`<circle cx="13" cy="13" r="8" fill="none" stroke="#8a5f30" stroke-width="1"/><circle cx="13" cy="11" r="3" fill="#c9a070" stroke="#8a5f30" stroke-width=".6"/><path d="M7.500 18.500c1-3 3-4 5.500-4s4.500 1 5.500 4" fill="#c9a070"/><rect x="24.500" y="4" width="1.500" height="18" fill="#4a90d8"/>`),0],
 [tile('#fff',[[6,'#3a80ea'],[13,'#f04a3a'],[20,'#f59a1e']].map(([y,c])=>`<circle cx="6" cy="${y}" r="2" fill="${c}"/><path d="M10 ${y}h12" stroke="#ccc" stroke-width=".8"/>`).join('')),0],
 [tile('#f7f4e8',`<path d="M0 8V6a6 6 0 0 1 6-6h14a6 6 0 0 1 6 6v2z" fill="#fcc92e"/><path d="M2 13h22M2 18h22" stroke="#ddd" stroke-width=".6"/>`),1],
 [`<svg width="26" height="26" viewBox="0 0 26 26" aria-label="TV"><rect width="26" height="26" rx="6" fill="#111c1c"/><text x="16" y="17" text-anchor="middle" font-size="11" font-family="Roboto" font-weight="500" fill="#fff">tv</text><circle cx="7.500" cy="13.500" r="2.300" fill="#fff"/><path d="M7.500 10.800q.3-1.300 1.300-1.500" stroke="#fff" stroke-width=".7" fill="none"/></svg>`,1],
 [tile('url(#mu)',`<path d="M10 7l8-2v11.500" stroke="#fff" stroke-width="1.500" fill="none"/><path d="M10 7v11.500" stroke="#fff" stroke-width="1.500"/><circle cx="8" cy="18.500" r="2.300" fill="#fff"/><circle cx="16" cy="16.500" r="2.300" fill="#fff"/>`,lg('mu','#fb5c74','#f01c3c')),1],
 [tile('url(#po)',`<circle cx="13" cy="11" r="8" fill="none" stroke="#fff" stroke-width="1"/><circle cx="13" cy="11" r="5" fill="none" stroke="#fff" stroke-width="1"/><circle cx="13" cy="11" r="2" fill="#fff"/><rect x="11.500" y="14" width="3" height="8" rx="1.500" fill="#fff"/>`,lg('po','#cb7cf2','#8a3ac8')),0],
 [tile('url(#as)',`<path d="M14 5L7 18M12 5l7 13M5 17h16" stroke="#fff" stroke-width="1.700" stroke-linecap="round"/>`,lg('as','#22c4fb','#1270ed')),0],
 [tile('#fff',`<path d="M5 5h7l9 16H5zM14 5h7v10z" fill="#f5405a"/><path d="M5 5l12 16" stroke="#fff" stroke-width="1.200"/>`),0],
 [tile('url(#sp)',`<circle cx="13" cy="13" r="10.500" fill="#5a5a5a"/><circle cx="13" cy="13" r="8" fill="none" stroke="#aaa" stroke-width="1.500" stroke-dasharray="2 1.500"/><circle cx="13" cy="13" r="2.300" fill="#888"/><path d="M13 6v5M7 17l4-3M19 17l-4-3" stroke="#aaa" stroke-width="1.300"/>`,lg('sp','#cfcfcf','#7d7d7d')),1],
 [`<svg width="28" height="28" viewBox="0 0 28 28" style="margin:-1px"><circle cx="14" cy="14" r="13.500" fill="#125f9e"/><path d="M4 14h20" stroke="#fff" stroke-width="1.500"/><path d="M8 10v8M11 7v14M14 9v10M17 5v18M20 9v10" stroke="#fff" stroke-width="1.800" stroke-linecap="round"/></svg>`,0],
 [tile('#f2f2f2',`<circle cx="13" cy="13" r="10.500" fill="#e33b2e"/><path d="M13 13L22 18.500A10.500 10.500 0 0 1 6 21z" fill="#f8c62c"/><path d="M13 13L5 21A10.500 10.500 0 0 1 4 8z" fill="#2aa44f"/><circle cx="13" cy="13" r="5" fill="#fff"/><circle cx="13" cy="13" r="4" fill="#3a7ee8"/>`),1],
 [tile('#fff',`<path d="M10 4h12v18H10z" fill="#21a366"/><path d="M16 4h6v6h-6zM16 16h6v6h-6z" fill="#107c41"/><path d="M10 10h6v6h-6z" fill="#185c37"/><rect x="4" y="8" width="10" height="10" rx="1" fill="#107c41"/><path d="M7 10.500l4 5M11 10.500l-4 5" stroke="#fff" stroke-width="1.100"/>`),1],
 'sep',
 [tile('#fff',`<path d="M11 4h11v18H11z" fill="#a033c0"/><path d="M17 4h5v6h-5z" fill="#c06ad8"/><path d="M17 16h5v6h-5z" fill="#7a1c9c"/><rect x="4" y="8" width="10" height="10" rx="1" fill="#7a2aa8"/><path d="M7 15.500v-5l4 5v-5" stroke="#fff" stroke-width="1" fill="none"/>`),1],
 [`<svg width="26" height="26" viewBox="0 0 26 26"><circle cx="13" cy="13" r="13" fill="#1ed760"/><path d="M6 9.500c5-1.500 10-1 14.500 1.500M7 13.200c4.500-1.200 8.500-.8 12 1.300M8 16.700c3.500-1 7-.7 10 1" stroke="#111" stroke-width="1.700" fill="none" stroke-linecap="round"/></svg>`,1],
 [tile('#2368e6',`<circle cx="15" cy="11" r="6.500" fill="none" stroke="#fff" stroke-width="1.600"/><path d="M10.500 16L4 22" stroke="#fff" stroke-width="2"/><path d="M15 8v6M12 11h6" stroke="#fff" stroke-width="1.600"/>`),1],
 'sep',
 [`<svg width="24" height="30" viewBox="0 0 24 30" style="margin:-2px 1px"><path d="M2 1l20 0v28H2z" fill="#f8f6f2"/><rect x="4" y="4" width="7" height="8" fill="#8a6a4a"/><rect x="12" y="3" width="8" height="9" fill="#3c2c20"/><rect x="4" y="13" width="8" height="6" fill="#d8b8a0"/><rect x="13" y="14" width="7" height="6" fill="#b89078"/><rect x="6" y="21" width="5" height="6" fill="#5a3c28"/><rect x="13" y="22" width="6" height="5" fill="#c8a890"/></svg>`,0],
 [`<svg width="26" height="30" viewBox="0 0 26 30" style="margin:-2px 0"><path d="M3 5h20l-2.500 23a2 2 0 0 1-2 1.500h-11a2 2 0 0 1-2-1.500z" fill="#8d8d8d"/><path d="M7 7l1.500 20M13 7v20M19 7l-1.500 20" stroke="#aaa" stroke-width=".7"/><ellipse cx="13" cy="5" rx="10" ry="3" fill="#ccc"/><path d="M6 4l3-2 2 2 3-2 2 2 3-1 1 2-14 1z" fill="#e8e8e8"/></svg>`,0]
];
class MacDock extends Base{connectedCallback(){
 let h='';DOCK.forEach(d=>{
  if(d==='sep'){h+='<span class="s"></span>';return;}
  h+=`<span class="i">${d[0]}${d[1]?'<i class="dot"></i>':''}</span>`;
 });
 this.render(`:host{display:flex;align-items:center;box-sizing:border-box;margin:1px 0 0 29px;width:940px;height:42px;border-radius:10px;flex:none;padding-left:6px;background:linear-gradient(90deg,#26194e 0,#2a1b55 35%,#3a2445 55%,#2a2230 75%,#241f26 100%);box-shadow:0 0 0 .5px #55506a;position:relative}
 .i{width:26px;height:26px;margin-right:8.800px;position:relative;display:block;flex:none;margin-top:-7px}
 .i svg{display:block}
 .dot{position:absolute;left:12px;bottom:-7px;width:2px;height:2px;border-radius:50%;background:#bbb;display:block}
 .s{width:1px;height:30px;background:#555;margin:-4px 15px 0 6.500px;flex:none}
 .b{position:absolute;background:#f04030;color:#fff;border-radius:7px;font:7px/12px Roboto,sans-serif;height:12px;text-align:center;box-sizing:border-box}`,
 h+`<span class="b" style="left:128px;width:12px;top:4px;font-size:7px">42</span><span class="b" style="left:152px;width:22px;top:4px;font-size:7px">93,070</span><span class="b" style="left:616px;width:11px;top:4px">2</span>`);
}}
class MacDesk extends Base{connectedCallback(){
 this.render(`:host{display:flex;height:3px;margin-top:1px;flex:none}i{display:block;flex:none;height:3px}`,
 `<i style="width:465px"></i><i style="width:17px;background:#2a2030"></i><i style="width:23px;background:#9a9a9a"></i><i style="width:155px;background:#2c2030"></i><i style="width:40px;background:#141414"></i><i style="flex:1;background:#111;border-top:1px solid #444;border-radius:4px 0 0 0;box-sizing:border-box"></i>`);
}}
[['mac-menubar',MacMenubar],['xl-window',XlWindow],['xl-titlebar',XlTitlebar],['xl-tabs',XlTabs],['xl-ribbon',XlRibbon],['xl-security',XlSecurity],['xl-formula',XlFormula],['xl-sheet',XlSheet],['xl-sheettabs',XlSheettabs],['xl-status',XlStatus],['mac-dock',MacDock],['mac-desk',MacDesk]].forEach(([n,c])=>customElements.define(n,c));
</script>
</body></html>
